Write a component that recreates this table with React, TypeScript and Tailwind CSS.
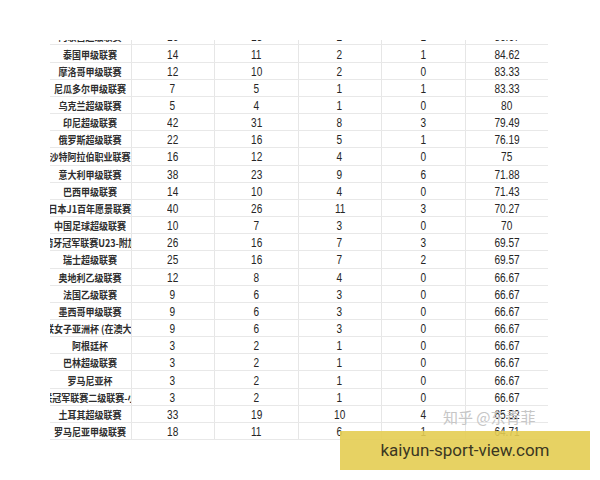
const rows = [
  { name: "阿联酋超级联赛", total: 16, win: 13, draw: 2, lose: 1, rate: "86.67" },
  { name: "泰国甲级联赛", total: 14, win: 11, draw: 2, lose: 1, rate: "84.62" },
  { name: "摩洛哥甲级联赛", total: 12, win: 10, draw: 2, lose: 0, rate: "83.33" },
  { name: "尼瓜多尔甲级联赛", total: 7, win: 5, draw: 1, lose: 1, rate: "83.33" },
  { name: "乌克兰超级联赛", total: 5, win: 4, draw: 1, lose: 0, rate: "80" },
  { name: "印尼超级联赛", total: 42, win: 31, draw: 8, lose: 3, rate: "79.49" },
  { name: "俄罗斯超级联赛", total: 22, win: 16, draw: 5, lose: 1, rate: "76.19" },
  { name: "沙特阿拉伯职业联赛", total: 16, win: 12, draw: 4, lose: 0, rate: "75" },
  { name: "意大利甲级联赛", total: 38, win: 23, draw: 9, lose: 6, rate: "71.88" },
  { name: "巴西甲级联赛", total: 14, win: 10, draw: 4, lose: 0, rate: "71.43" },
  { name: "日本J1百年愿景联赛", total: 40, win: 26, draw: 11, lose: 3, rate: "70.27" },
  { name: "中国足球超级联赛", total: 10, win: 7, draw: 3, lose: 0, rate: "70" },
  { name: "葡萄牙冠军联赛U23-附加赛", total: 26, win: 16, draw: 7, lose: 3, rate: "69.57" },
  { name: "瑞士超级联赛", total: 25, win: 16, draw: 7, lose: 2, rate: "69.57" },
  { name: "奥地利乙级联赛", total: 12, win: 8, draw: 4, lose: 0, rate: "66.67" },
  { name: "法国乙级联赛", total: 9, win: 6, draw: 3, lose: 0, rate: "66.67" },
  { name: "墨西哥甲级联赛", total: 9, win: 6, draw: 3, lose: 0, rate: "66.67" },
  { name: "亚足联女子亚洲杯 (在澳大利亚)", total: 9, win: 6, draw: 3, lose: 0, rate: "66.67" },
  { name: "阿根廷杯", total: 3, win: 2, draw: 1, lose: 0, rate: "66.67" },
  { name: "巴林超级联赛", total: 3, win: 2, draw: 1, lose: 0, rate: "66.67" },
  { name: "罗马尼亚杯", total: 3, win: 2, draw: 1, lose: 0, rate: "66.67" },
  { name: "亚足联冠军联赛二级联赛-小组赛", total: 3, win: 2, draw: 1, lose: 0, rate: "66.67" },
  { name: "土耳其超级联赛", total: 33, win: 19, draw: 10, lose: 4, rate: "65.52" },
  { name: "罗马尼亚甲级联赛", total: 18, win: 11, draw: 6, lose: 1, rate: "64.71" },
];

function Num({ value, last }: { value: string | number; last?: boolean }) {
  return (
    <div
      className={`flex items-center justify-center pt-[2px] ${last ? "" : "border-r border-[#e6e6e6]"}`}
    >
      <span className="block scale-x-[0.84] text-[12px] leading-none text-[#262626] font-['Liberation_Sans',Arial,sans-serif]">
        {value}
      </span>
    </div>
  );
}

export default function App() {
  return (
    <div className="relative w-[600px] h-[480px] bg-white overflow-hidden">
      <div className="pt-[40px] pl-[50px]">
        <div className="w-[498px] h-[400px] overflow-hidden">
          <div className="-mt-[11.7px]">
            {rows.map((r) => (
              <div
                key={r.name}
                className="grid grid-cols-[81.5px_83.5px_83.5px_83.5px_83.5px_83px] h-[17.17px] border-b border-[#e8e8e8]"
              >
                <div className="flex items-center justify-center overflow-hidden border-r border-[#e6e6e6] pt-[2px]">
                  <span className="block shrink-0 whitespace-nowrap scale-x-[0.9] text-[10px] leading-none font-semibold text-[#2e2e2e] font-['Noto_Sans_CJK_SC','Noto_Sans',sans-serif]">
                    {r.name}
                  </span>
                </div>
                <Num value={r.total} />
                <Num value={r.win} />
                <Num value={r.draw} />
                <Num value={r.lose} />
                <Num value={r.rate} last />
              </div>
            ))}
          </div>
        </div>
      </div>

      <div className="absolute left-[443px] top-[409px] text-[15px] leading-none text-[#c6c6c6] font-['Noto_Sans_CJK_SC',sans-serif]">
        知乎 @东青菲
      </div>

      <div className="absolute left-[340px] top-[431px] w-[250px] h-[39px] bg-[#e4cd52]/90 flex items-center justify-center">
        <span className="text-[17px] leading-none text-[#3b3722] font-['Roboto',sans-serif]">
          kaiyun-sport-view.com
        </span>
      </div>
    </div>
  );
}
